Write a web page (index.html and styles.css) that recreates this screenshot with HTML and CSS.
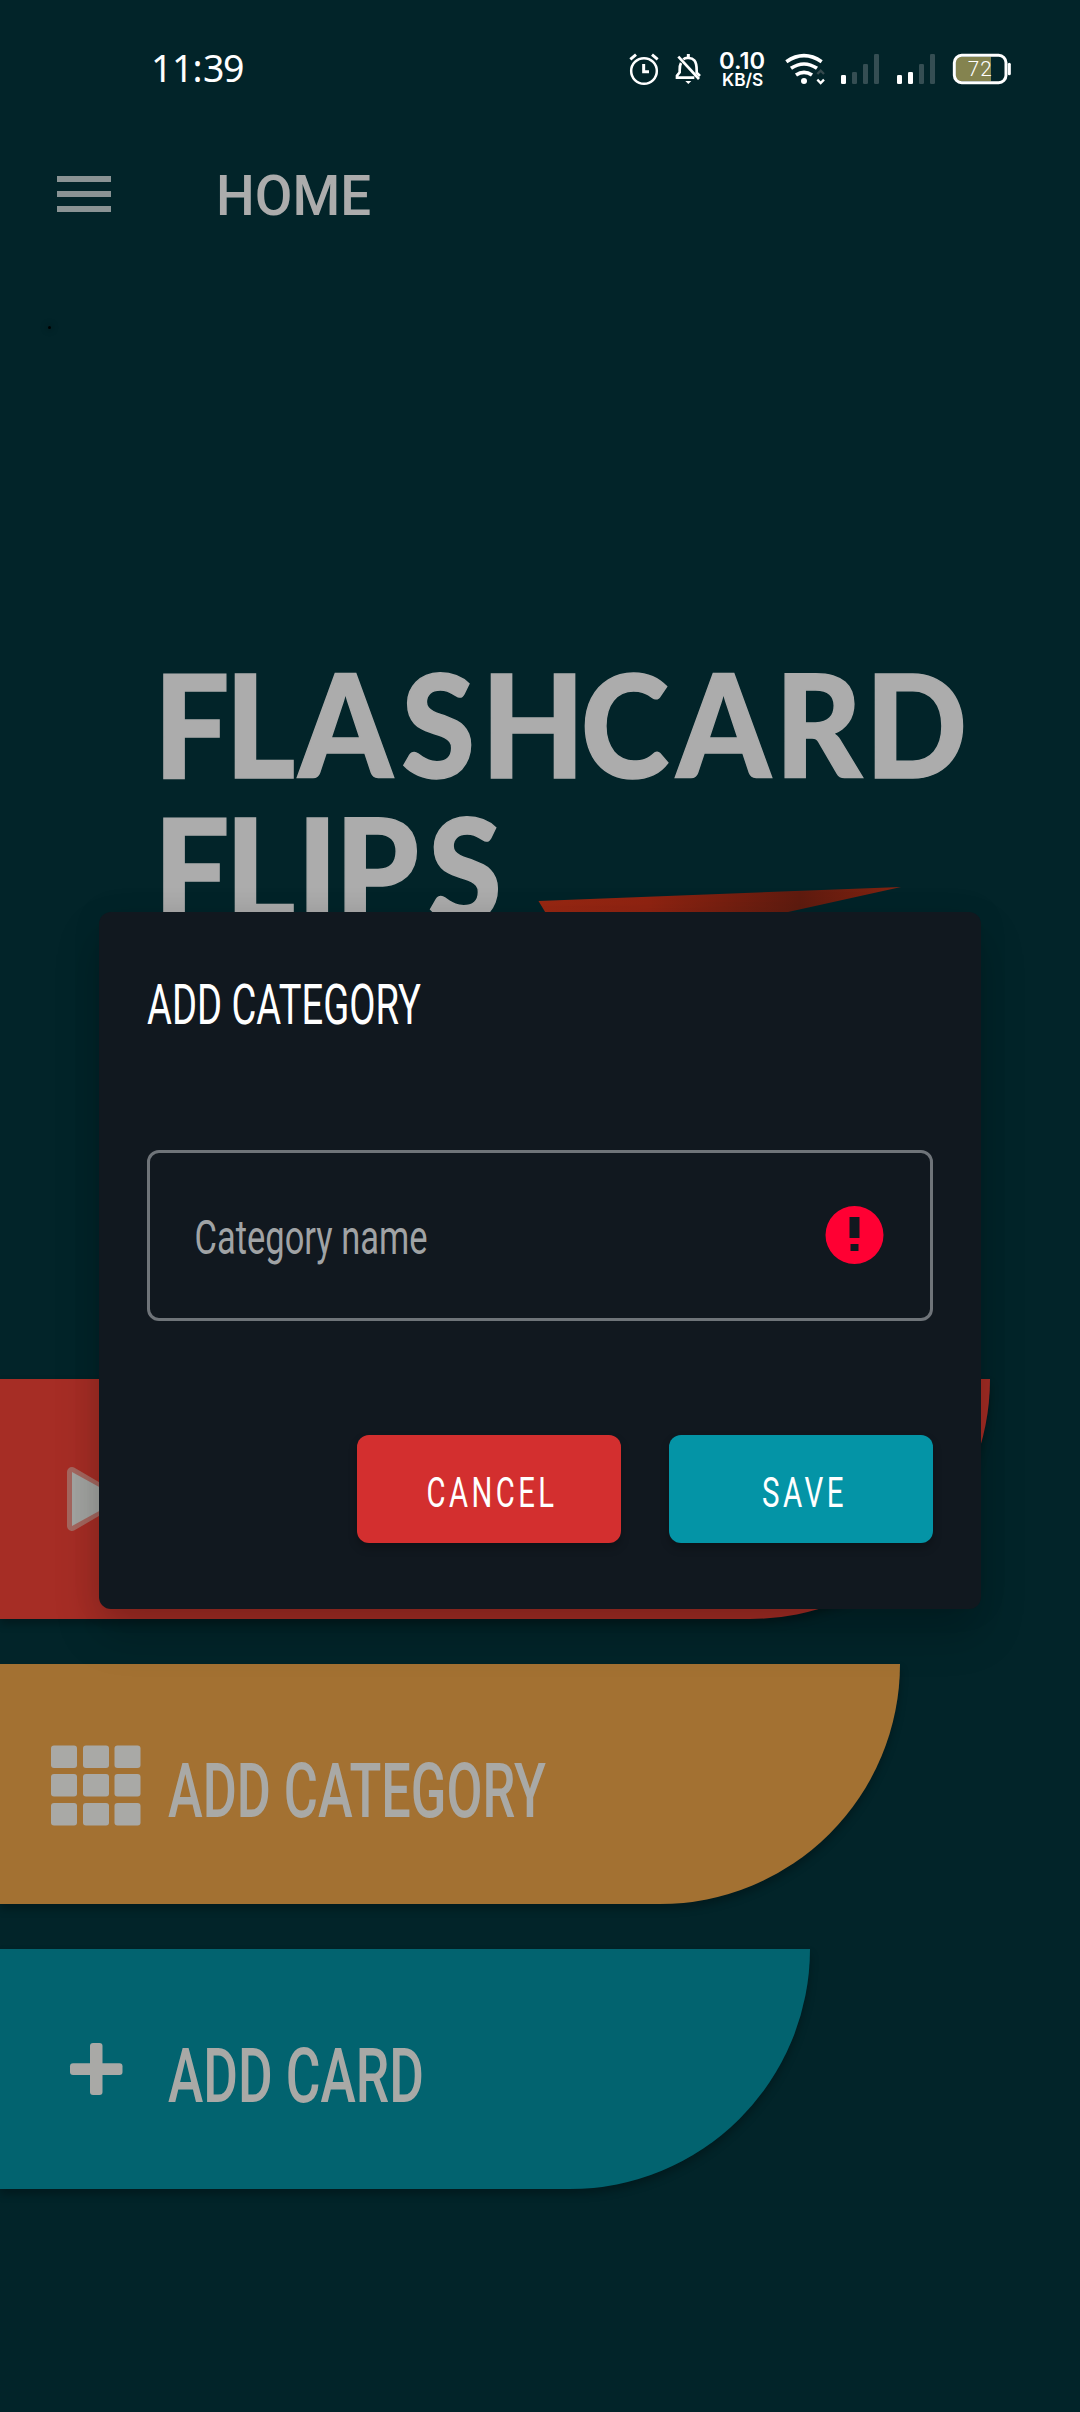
FILE: index.html
```html
<!DOCTYPE html>
<html lang="en">
<head>
<meta charset="utf-8">
<title>Flashcard Flips</title>
<link rel="stylesheet" href="styles.css">
</head>
<body>
<div class="screen">
  <header class="status">
    <svg class="clock" width="120" height="80" viewBox="0 0 120 80">
      <text x="-1 20 40.500 51 71" y="52" font-size="37.500">11:39</text>
    </svg>
    <svg class="indicators" width="440" height="80" viewBox="0 0 1320 240" fill="none" stroke="#fff">
      <g stroke-width="7.500">
        <circle cx="132" cy="123" r="38.500"/>
        <path d="M131 102V125H147" stroke-width="9"/>
        <path d="M91 88L108 74M156 74L173 88" stroke-width="9"/>
      </g>
      <g stroke-width="8">
        <path d="M243 99C240 104 239 112 239 121V127L231 137V143H283"/>
        <path d="M250 88C256 82 275 82 283 91C289 98 290 107 290 121V128L300 138"/>
        <path d="M235 80L297 147"/>
        <path d="M265 72V83" stroke-width="9"/>
        <path d="M256 153H274L265 162Z" fill="#fff" stroke="none"/>
      </g>
      <g class="rate">
        <text x="357" y="116" font-size="69" textLength="138" lengthAdjust="spacingAndGlyphs">0.10</text>
        <text x="366" y="168" font-size="53" textLength="124" lengthAdjust="spacingAndGlyphs">KB/S</text>
      </g>
      <g stroke-width="11">
        <path d="M559 95Q612 59 665 95"/>
        <path d="M573 115Q612 89 651 115"/>
        <path d="M588 135Q612 119 636 135"/>
        <circle cx="612" cy="153" r="9" fill="#fff" stroke="none"/>
        <path d="M652 132L662 122L672 132" stroke="#35494d" stroke-width="7"/>
        <path d="M652 149L662 159L672 149" stroke-width="7"/>
      </g>
      <g stroke="none">
        <g fill="#354e53">
          <rect x="756" y="126" width="15" height="36" rx="4"/><rect x="789" y="102" width="15" height="60" rx="4"/><rect x="822" y="72" width="15" height="90" rx="4"/>
          <rect x="957" y="102" width="15" height="60" rx="4"/><rect x="990" y="72" width="15" height="90" rx="4"/>
        </g>
        <g fill="#fff">
          <rect x="723" y="135" width="15" height="27" rx="4"/><rect x="891" y="135" width="15" height="27" rx="4"/><rect x="924" y="126" width="15" height="36" rx="4"/>
        </g>
      </g>
      <path d="M1082 80H1173V154H1082Q1067 154 1067 138V96Q1067 80 1082 80Z" fill="#84834f" stroke="none"/>
      <rect x="1063" y="76" width="155" height="82" rx="22" stroke-width="9"/>
      <path d="M1228 103V131" stroke-width="9" stroke-linecap="round"/>
      <text class="charge" x="1103" y="138" font-size="62" textLength="72">72</text>
    </svg>
  </header>

  <nav class="appbar">
    <svg width="54" height="36" viewBox="0 0 54 36" fill="#8a9394"><path d="M0 0H54V6H0ZM0 15H54V21H0ZM0 30H54V36H0Z"/></svg>
    <svg class="page-title" width="160" height="60" viewBox="0 0 160 60">
      <text x="1" y="49" font-size="55" textLength="155" lengthAdjust="spacingAndGlyphs">HOME</text>
    </svg>
  </nav>

  <main>
    <section class="hero">
      <i class="speck"></i>
      <svg class="logo" width="820" height="320" viewBox="0 0 820 320">
        <defs>
          <linearGradient id="flame" x1="0" x2="1"><stop offset="0" stop-color="#9a2813"/><stop offset=".3" stop-color="#922412"/><stop offset=".72" stop-color="#601c10"/><stop offset="1" stop-color="#842411"/></linearGradient>
        </defs>
        <g transform="scale(.93 1)">
          <text x="-11 66 144.500 255 341 448 551 657 754" y="127.500" font-size="144">FLASHCARD</text>
          <text x="-11 66 143 184 284" y="272.500" font-size="144">FLIPS</text>
        </g>
        <path d="M374.500 251L737 237L624 262L500 290H398Z" fill="url(#flame)"/>
      </svg>
    </section>

    <ul class="menu">
      <li class="item play">
        <svg class="icon" width="100" height="90" viewBox="0 0 100 90">
          <path d="M27 17L73 44L27 71Z" fill="#a3a5a2" stroke="#a5675f" stroke-width="10" stroke-linejoin="round"/>
          <path d="M27 17L76 44L27 71Z" fill="#a3a5a2"/>
        </svg>
      </li>
      <li class="item category">
        <svg class="icon" width="100" height="90" viewBox="0 0 100 90" fill="#a9a9a6">
          <g id="row"><rect x="6" y="5.500" width="26" height="22.500" rx="3"/><rect x="38" y="5.500" width="26" height="22.500" rx="3"/><rect x="69.500" y="5.500" width="26" height="22.500" rx="3"/></g>
          <use href="#row" y="28.500"/><use href="#row" y="57.500"/>
        </svg>
        <svg class="label" width="400" height="90" viewBox="0 0 400 90"><text x="-1" y="76.500" font-size="76" textLength="378" lengthAdjust="spacingAndGlyphs">ADD CATEGORY</text></svg>
      </li>
      <li class="item card">
        <svg class="icon" width="100" height="90" viewBox="0 0 100 90" fill="#a9a9a6">
          <rect x="45" y="18" width="12.500" height="52" rx="3"/><rect x="25" y="38.300" width="52.500" height="11.700" rx="3"/>
        </svg>
        <svg class="label" width="400" height="90" viewBox="0 0 400 90"><text x="-1" y="76.500" font-size="76" textLength="256" lengthAdjust="spacingAndGlyphs">ADD CARD</text></svg>
      </li>
    </ul>
  </main>

  <section class="dialog" role="dialog">
    <svg class="heading" width="300" height="80" viewBox="0 0 300 80"><text x="0" y="63.500" font-size="55.500" textLength="274" lengthAdjust="spacingAndGlyphs">ADD CATEGORY</text></svg>
    <div class="field">
      <svg class="hint" width="260" height="60" viewBox="0 0 260 60"><text x="0.500" y="48" font-size="47.500" textLength="233" lengthAdjust="spacingAndGlyphs">Category name</text></svg>
      <svg width="59" height="59" viewBox="0 0 59 59"><path fill="#ff0033" fill-rule="evenodd" d="M29.500 0A29 29 0 1 0 29.500 58A29 29 0 1 0 29.500 0ZM24.500 11H34.500V32H24.500ZM25.500 38H33.500V45H25.500Z"/></svg>
    </div>
    <div class="actions">
      <div class="button cancel"><svg width="264" height="108" viewBox="0 0 264 108"><text x="69.500" y="72" font-size="42" textLength="131" lengthAdjust="spacingAndGlyphs">CANCEL</text></svg></div>
      <div class="button save"><svg width="264" height="108" viewBox="0 0 264 108"><text x="93" y="72" font-size="42" textLength="85" lengthAdjust="spacingAndGlyphs">SAVE</text></svg></div>
    </div>
  </section>
</div>
</body>
</html>
```
FILE: styles.css
```css
* { box-sizing: border-box; }
body { margin: 0; background: #022429; font-family: Roboto, sans-serif; }
svg { display: block; overflow: visible; flex: none; }
text { stroke: none; font-family: Roboto, sans-serif; }
.screen { position: relative; width: 1080px; height: 2412px; overflow: hidden; background: #022429; }

.status { display: flex; justify-content: space-between; height: 146px; padding: 30px 40px 0 152px; }
.clock text { fill: #fff; font-family: "Noto Sans", sans-serif; }
.rate text { fill: #fff; font-family: Inter, sans-serif; font-weight: 600; }
.charge { fill: #fff; font-weight: 300; }

.appbar { display: flex; height: 90px; padding: 30px 0 0 57px; gap: 104px; }
.page-title { margin-top: -10px; }
.page-title text { fill: #acacac; font-weight: 500; }

.hero { position: relative; height: 1143px; padding: 414px 0 0 164px; }
.speck { position: absolute; left: 48px; top: 90px; width: 3px; height: 3px; border-radius: 50%; background: #000; box-shadow: 0 0 6px 2px rgba(0, 0, 0, .2); }
.logo text { font-family: Lato, sans-serif; font-weight: 900; fill: #acacac; stroke: #acacac; stroke-width: 1.5px; }

.menu { display: flex; flex-direction: column; gap: 45px; margin: 0; padding: 0; list-style: none; }
.item { display: flex; gap: 24px; height: 240px; padding: 76px 0 0 45px; border-bottom-right-radius: 240px; box-shadow: 0 5px 9px rgba(0, 0, 0, .28); }
.play { width: 990px; background: #a62d25; }
.category { width: 900px; background: #a37132; }
.card { width: 810px; background: #02636f; }
.label text { fill: #a9a9a6; font-weight: 500; }

.dialog { position: absolute; left: 99px; top: 912px; width: 882px; height: 697px; padding: 48px; border-radius: 12px; background: #11181f; box-shadow: 0 24px 46px rgba(0, 0, 0, .2), 0 0 30px rgba(0, 0, 0, .08); }
.heading { margin-bottom: 110px; }
.heading text { fill: #fff; font-weight: 450; }
.field { display: flex; align-items: center; justify-content: space-between; height: 171px; padding: 0 46px 0 44px; border: 3px solid #6f7479; border-radius: 12px; }
.hint text { fill: #a0a3a5; font-weight: 450; }
.actions { display: flex; justify-content: flex-end; gap: 48px; margin-top: 114px; }
.button { width: 264px; height: 108px; border-radius: 12px; box-shadow: 0 5px 8px rgba(0, 0, 0, .25); }
.button text { fill: #fff; letter-spacing: 5px; font-weight: 450; }
.cancel { background: #d32f2f; }
.save { background: #0494a6; }
```
